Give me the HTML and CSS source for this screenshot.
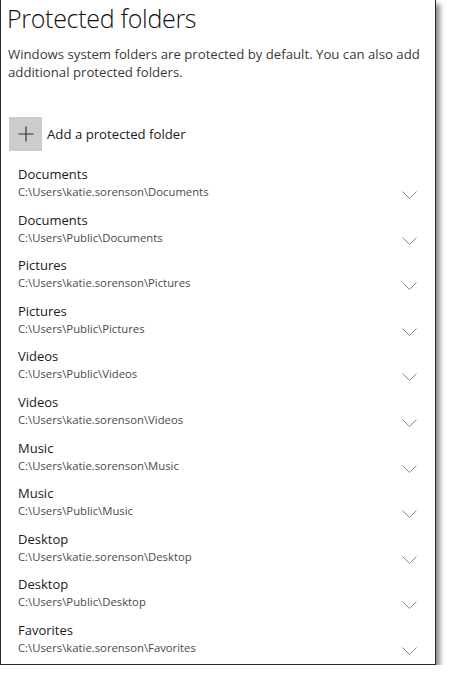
FILE: index.html
```html
<!DOCTYPE html>
<html>
<head>
<meta charset="utf-8">
<link rel="stylesheet" href="styles.css">
</head>
<body>
<div class="panel">
  <h1 class="title">Protected folders</h1>
  <p class="desc">Windows system folders are protected by default. You can also add additional protected folders.</p>
  <div class="add">
    <span class="add-btn"><svg width="16" height="16" viewBox="0 0 16 16"><path d="M8 0.5V15.5M0.5 8H15.5" stroke="#333" stroke-width="1.2" fill="none"/></svg></span>
    <span class="add-label">Add a protected folder</span>
  </div>
  <ul class="list">
    <li class="item"><div class="text"><div class="name">Documents</div><div class="path">C:\Users\katie.sorenson\Documents</div></div><svg class="chev" width="15" height="8" viewBox="0 0 15 8"><path d="M0.5 0.5L7.5 7.5L14.5 0.5" stroke="#8a8a8a" fill="none"/></svg></li>
    <li class="item"><div class="text"><div class="name">Documents</div><div class="path">C:\Users\Public\Documents</div></div><svg class="chev" width="15" height="8" viewBox="0 0 15 8"><path d="M0.5 0.5L7.5 7.5L14.5 0.5" stroke="#8a8a8a" fill="none"/></svg></li>
    <li class="item"><div class="text"><div class="name">Pictures</div><div class="path">C:\Users\katie.sorenson\Pictures</div></div><svg class="chev" width="15" height="8" viewBox="0 0 15 8"><path d="M0.5 0.5L7.5 7.5L14.5 0.5" stroke="#8a8a8a" fill="none"/></svg></li>
    <li class="item"><div class="text"><div class="name">Pictures</div><div class="path">C:\Users\Public\Pictures</div></div><svg class="chev" width="15" height="8" viewBox="0 0 15 8"><path d="M0.5 0.5L7.5 7.5L14.5 0.5" stroke="#8a8a8a" fill="none"/></svg></li>
    <li class="item"><div class="text"><div class="name">Videos</div><div class="path">C:\Users\Public\Videos</div></div><svg class="chev" width="15" height="8" viewBox="0 0 15 8"><path d="M0.5 0.5L7.5 7.5L14.5 0.5" stroke="#8a8a8a" fill="none"/></svg></li>
    <li class="item"><div class="text"><div class="name">Videos</div><div class="path">C:\Users\katie.sorenson\Videos</div></div><svg class="chev" width="15" height="8" viewBox="0 0 15 8"><path d="M0.5 0.5L7.5 7.5L14.5 0.5" stroke="#8a8a8a" fill="none"/></svg></li>
    <li class="item"><div class="text"><div class="name">Music</div><div class="path">C:\Users\katie.sorenson\Music</div></div><svg class="chev" width="15" height="8" viewBox="0 0 15 8"><path d="M0.5 0.5L7.5 7.5L14.5 0.5" stroke="#8a8a8a" fill="none"/></svg></li>
    <li class="item"><div class="text"><div class="name">Music</div><div class="path">C:\Users\Public\Music</div></div><svg class="chev" width="15" height="8" viewBox="0 0 15 8"><path d="M0.5 0.5L7.5 7.5L14.5 0.5" stroke="#8a8a8a" fill="none"/></svg></li>
    <li class="item"><div class="text"><div class="name">Desktop</div><div class="path">C:\Users\katie.sorenson\Desktop</div></div><svg class="chev" width="15" height="8" viewBox="0 0 15 8"><path d="M0.5 0.5L7.5 7.5L14.5 0.5" stroke="#8a8a8a" fill="none"/></svg></li>
    <li class="item"><div class="text"><div class="name">Desktop</div><div class="path">C:\Users\Public\Desktop</div></div><svg class="chev" width="15" height="8" viewBox="0 0 15 8"><path d="M0.5 0.5L7.5 7.5L14.5 0.5" stroke="#8a8a8a" fill="none"/></svg></li>
    <li class="item"><div class="text"><div class="name">Favorites</div><div class="path">C:\Users\katie.sorenson\Favorites</div></div><svg class="chev" width="15" height="8" viewBox="0 0 15 8"><path d="M0.5 0.5L7.5 7.5L14.5 0.5" stroke="#8a8a8a" fill="none"/></svg></li>
  </ul>
</div>
</body>
</html>
```
FILE: styles.css
```css
html, body {
  margin: 0;
  padding: 0;
  background: #fff;
}
body {
  font-family: "Open Sans", "Noto Sans", sans-serif;
  color: #1f1f1f;
}
.panel {
  width: 434px;
  height: 664px;
  border-left: 1px solid #2a2a2a;
  border-right: 1px solid #2a2a2a;
  border-bottom: 1px solid #2a2a2a;
  box-shadow: 4px 4px 5px rgba(0, 0, 0, 0.45);
  background: #fff;
  box-sizing: content-box;
  overflow: hidden;
}
.title {
  margin: 0;
  padding: 2px 0 0 6px;
  font-weight: 300;
  font-size: 25px;
  letter-spacing: -0.3px;
  line-height: 32px;
  color: #111;
}
.desc {
  margin: 11px 0 0 7px;
  font-size: 13.2px;
  line-height: 18px;
  color: #3a3a3a;
  width: 420px;
}
.add {
  margin: 36px 0 0 8px;
  display: flex;
  align-items: center;
  gap: 5px;
}
.add-btn {
  width: 33px;
  height: 34px;
  background: #cccccc;
  display: flex;
  align-items: center;
  justify-content: center;
}
.add-label {
  font-size: 13.2px;
  color: #1a1a1a;
}
.list {
  list-style: none;
  margin: 14px 0 0 0;
  padding: 0;
}
.item {
  height: 45.6px;
  display: flex;
  align-items: flex-start;
  justify-content: space-between;
  padding: 0 18px 0 17px;
  box-sizing: border-box;
}
.name {
  font-size: 13px;
  line-height: 18px;
  color: #1a1a1a;
}
.path {
  font-size: 11.3px;
  line-height: 17px;
  color: #4a4a4a;
}
.chev {
  margin-top: 26px;
}
```
